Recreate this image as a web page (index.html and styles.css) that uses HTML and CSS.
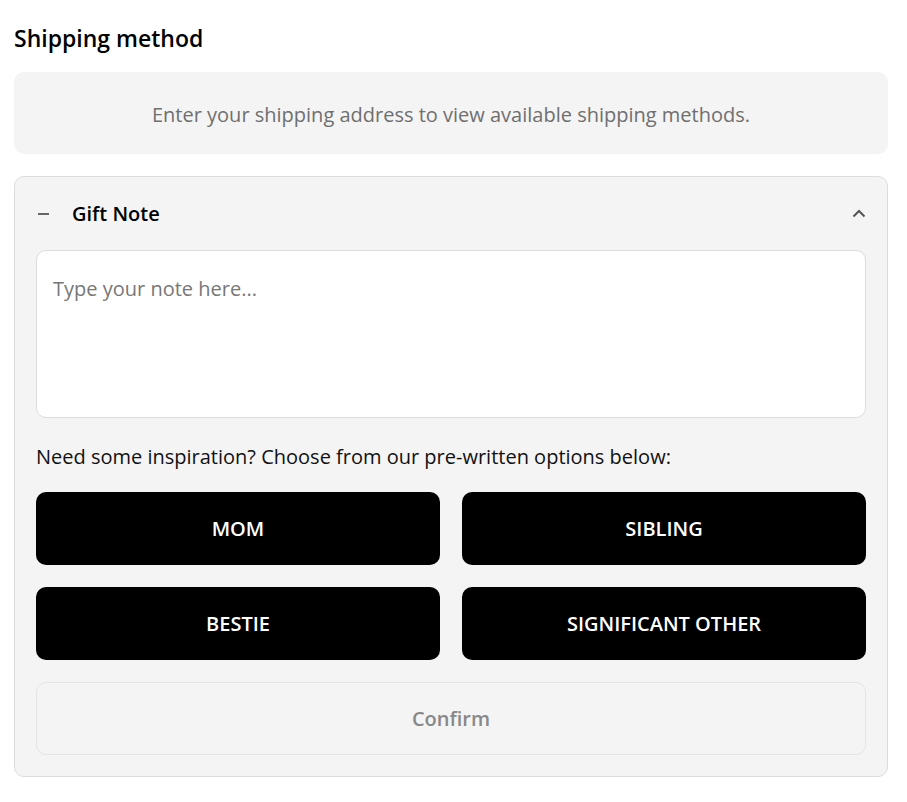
FILE: index.html
```html
<!DOCTYPE html>
<html>
<head>
<meta charset="utf-8">
<link rel="stylesheet" href="styles.css">
</head>
<body>
<div class="page">
  <h2 class="title">Shipping method</h2>
  <div class="notice">Enter your shipping address to view available shipping methods.</div>
  <div class="card">
    <div class="card-head">
      <span class="minus"></span>
      <span class="head-label">Gift Note</span>
      <svg class="chev" width="14" height="9" viewBox="0 0 14 9"><path d="M1.5 7.5 L7 2 L12.5 7.5" fill="none" stroke="#555" stroke-width="2"/></svg>
    </div>
    <textarea class="note" placeholder="Type your note here..."></textarea>
    <p class="hint">Need some inspiration? Choose from our pre-written options below:</p>
    <div class="options">
      <button class="opt">MOM</button>
      <button class="opt">SIBLING</button>
      <button class="opt">BESTIE</button>
      <button class="opt">SIGNIFICANT OTHER</button>
    </div>
    <button class="confirm">Confirm</button>
  </div>
</div>
</body>
</html>
```
FILE: styles.css
```css
* { box-sizing: border-box; }
body {
  margin: 0;
  background: #fff;
  font-family: "Open Sans", "Noto Sans", sans-serif;
  color: #111;
}
.page {
  width: 874px;
  margin-left: 14px;
  padding-top: 23px;
}
.title {
  margin: 0;
  font-size: 23px;
  font-weight: 600;
  line-height: 31px;
  color: #000;
}
.notice {
  margin-top: 18px;
  height: 82px;
  padding-top: 3px;
  background: #f4f4f4;
  border-radius: 10px;
  display: flex;
  align-items: center;
  justify-content: center;
  font-size: 20px;
  color: #6f6f6f;
}
.card {
  margin-top: 22px;
  background: #f4f4f4;
  border: 1px solid #dcdcdc;
  border-radius: 10px;
  padding: 0 21px 21px 21px;
}
.card-head {
  height: 73px;
  display: flex;
  align-items: center;
}
.minus {
  width: 11px;
  height: 2px;
  background: #666;
  margin-left: 2px;
}
.head-label {
  margin-left: 23px;
  font-size: 20px;
  font-weight: 600;
  color: #000;
  flex: 1;
}
.note {
  display: block;
  width: 100%;
  height: 168px;
  background: #fff;
  border: 1px solid #dcdcdc;
  border-radius: 10px;
  padding: 24px 16px;
  font-family: inherit;
  font-size: 20px;
  resize: none;
  outline: none;
}
.note::placeholder { color: #777; }
.hint {
  margin: 24px 0 0 0;
  font-size: 20px;
  line-height: 30px;
  color: #111;
}
.options {
  margin-top: 20px;
  display: grid;
  grid-template-columns: 1fr 1fr;
  gap: 22px;
}
.opt {
  height: 73px;
  background: #000;
  color: #fff;
  border: none;
  border-radius: 10px;
  font-family: inherit;
  font-size: 20px;
  font-weight: 600;
}
.confirm {
  margin-top: 22px;
  display: block;
  width: 100%;
  height: 73px;
  background: #f4f4f4;
  border: 1px solid #e4e4e4;
  border-radius: 10px;
  font-family: inherit;
  font-size: 20px;
  font-weight: 600;
  color: #888;
}
```
